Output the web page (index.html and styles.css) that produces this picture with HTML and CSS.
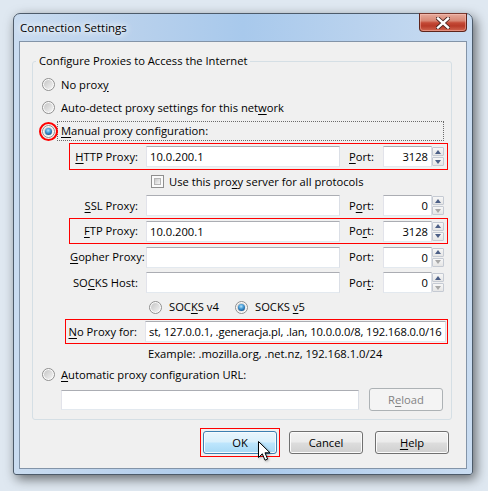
FILE: index.html
```html
<!DOCTYPE html>
<html>
<head>
<meta charset="utf-8">
<title>Connection Settings</title>
<link rel="stylesheet" href="styles.css">
</head>
<body>
<div class="window">
  <div class="titlebar">
    <span class="title">Connection Settings</span>
    <div class="close">
      <svg width="14" height="12" viewBox="0 0 14 12">
        <path d="M2 1.5 L12 10.5 M12 1.5 L2 10.5" stroke="#4a2520" stroke-width="4.2" stroke-linecap="square"/>
        <path d="M2 1.5 L12 10.5 M12 1.5 L2 10.5" stroke="#ffffff" stroke-width="2.4" stroke-linecap="square"/>
      </svg>
    </div>
  </div>
  <div class="client">
    <fieldset class="group">
      <legend>Configure Proxies to Access the Internet</legend>
      <div class="row radio-row"><span class="radio"></span><span>No prox<u>y</u></span></div>
      <div class="row radio-row"><span class="radio"></span><span>Auto-detect proxy settings for this net<u>w</u>ork</span></div>
      <div class="row manual-row">
        <span class="radio checked"><span class="ring"></span></span>
        <span class="focus"><u>M</u>anual proxy configuration:</span>
      </div>
      <div class="row proxy-row hl h27">
        <span class="plabel"><u>H</u>TTP Proxy:</span>
        <input class="text host" value="10.0.200.1">
        <span class="portlabel"><u>P</u>ort:</span>
        <input class="text port" value="3128">
        <span class="spin"><span class="sb"><i class="up"></i></span><span class="sb"><i class="down"></i></span></span>
      </div>
      <div class="row check-row"><span class="check"></span><span>Use this pro<u>x</u>y server for all protocols</span></div>
      <div class="row proxy-row h25">
        <span class="plabel"><u>S</u>SL Proxy:</span>
        <input class="text host" value="">
        <span class="portlabel">P<u>o</u>rt:</span>
        <input class="text port" value="0">
        <span class="spin"><span class="sb"><i class="up"></i></span><span class="sb"><i class="down off"></i></span></span>
      </div>
      <div class="row proxy-row hl h26">
        <span class="plabel"><u>F</u>TP Proxy:</span>
        <input class="text host" value="10.0.200.1">
        <span class="portlabel">Po<u>r</u>t:</span>
        <input class="text port" value="3128">
        <span class="spin"><span class="sb"><i class="up"></i></span><span class="sb"><i class="down"></i></span></span>
      </div>
      <div class="row proxy-row h26">
        <span class="plabel"><u>G</u>opher Proxy:</span>
        <input class="text host" value="">
        <span class="portlabel">Port:</span>
        <input class="text port" value="0">
        <span class="spin"><span class="sb"><i class="up"></i></span><span class="sb"><i class="down off"></i></span></span>
      </div>
      <div class="row proxy-row h25">
        <span class="plabel">SO<u>C</u>KS Host:</span>
        <input class="text host" value="">
        <span class="portlabel">Por<u>t</u>:</span>
        <input class="text port" value="0">
        <span class="spin"><span class="sb"><i class="up"></i></span><span class="sb"><i class="down off"></i></span></span>
      </div>
      <div class="row socks-row">
        <span class="socks-opt first"><span class="radio"></span><span>SOC<u>K</u>S v4</span></span>
        <span class="socks-opt"><span class="radio checked"></span><span>SOCKS <u>v</u>5</span></span>
      </div>
      <div class="row noproxy-row hl">
        <span class="nlabel"><u>N</u>o Proxy for:</span>
        <input class="text noproxy" value="st, 127.0.0.1, .generacja.pl, .lan, 10.0.0.0/8, 192.168.0.0/16">
      </div>
      <div class="row example-row">Example: .mozilla.org, .net.nz, 192.168.1.0/24</div>
      <div class="row radio-row"><span class="radio"></span><span><u>A</u>utomatic proxy configuration URL:</span></div>
      <div class="row url-row">
        <input class="text url" value="">
        <span class="btn disabled reload">R<u>e</u>load</span>
      </div>
    </fieldset>
    <div class="buttons">
      <span class="hl-btn"><span class="btn hot">OK</span></span>
      <span class="btn">Cancel</span>
      <span class="btn"><u>H</u>elp</span>
    </div>
  </div>
</div>
<svg class="cursor" width="14" height="21" viewBox="0 0 14 21">
  <path d="M0.5 0.5 L0.5 16.5 L4.3 12.8 L7 19.2 L9.6 18.1 L7 11.8 L12 11.8 Z" fill="#ffffff" stroke="#000000" stroke-width="1" stroke-linejoin="miter"/>
</svg>
</body>
</html>
```
FILE: styles.css
```css
* { box-sizing: border-box; }
html, body { margin: 0; }
body {
  width: 488px;
  height: 491px;
  overflow: hidden;
  position: relative;
  padding: 13px 0 0 13px;
  background: #dfe8f1;
  font-family: "Segoe UI", "Open Sans", "Noto Sans", sans-serif;
  font-size: 11.2px;
  line-height: 16px;
  color: #000;
}
u { text-decoration: underline; text-underline-offset: 2px; }

.window {
  width: 460px;
  height: 462px;
  border: 1px solid #4d5b6a;
  border-radius: 7px 7px 3px 3px;
  background: linear-gradient(90deg, #cadcf0 0%, #b7d0ec 28%, #a8c9ec 50%, #b9d2ee 75%, #c9dcf1 100%);
  box-shadow: 3px 4px 12px rgba(0, 0, 0, 0.55);
  padding: 0 5px 5px;
  display: flex;
  flex-direction: column;
}
.titlebar {
  height: 27px;
  display: flex;
  align-items: center;
  justify-content: space-between;
}
.title {
  padding-left: 1px;
  font-size: 11.5px;
  text-shadow: 0 0 5px #ffffff, 0 0 9px #ffffff, 0 0 12px rgba(255,255,255,0.8);
}
.close {
  align-self: flex-start;
  margin-top: -1px;
  width: 48px;
  height: 19px;
  border: 1px solid #5e241b;
  border-top-color: #7a3a30;
  border-radius: 0 0 4px 4px;
  background: linear-gradient(#e6aa9b 0%, #d88673 40%, #c44a36 52%, #b83a28 70%, #d06650 100%);
  box-shadow: inset 0 0 0 1px rgba(255, 200, 190, 0.45);
  display: flex;
  align-items: center;
  justify-content: center;
}

.client {
  flex: 1;
  border: 1px solid #8394a8;
  background: #f0f0f0;
  padding: 11px 14px 0 12px;
  display: flex;
  flex-direction: column;
}
.group {
  margin: 0;
  padding: 4px 0 6px;
  border: 1px solid #d5dfe5;
  border-radius: 3px;
  min-width: 0;
}
.group legend {
  padding: 0 3px;
  margin-left: 3px;
  line-height: 16px;
}

.row { display: flex; align-items: center; }
.radio-row { height: 23px; padding-left: 9px; gap: 6px; }
.manual-row { height: 24px; padding-left: 9px; gap: 2px; position: relative; }
.focus {
  width: 387px;
  height: 20px;
  border: 1px dotted #6a6a6a;
  padding: 0 3px;
  display: flex;
  align-items: center;
}

.radio {
  position: relative;
  flex: none;
  width: 13px;
  height: 13px;
  border-radius: 50%;
  border: 1px solid #8f8f8f;
  background: #fbfbfb;
}
.radio::before {
  content: "";
  position: absolute;
  left: 1px; top: 1px; right: 1px; bottom: 1px;
  border-radius: 50%;
  background: linear-gradient(135deg, #c6c6c6 0%, #dcdcdc 50%, #f4f4f4 100%);
}
.radio.checked::after {
  content: "";
  position: absolute;
  left: 2px; top: 2px;
  width: 7px; height: 7px;
  border-radius: 50%;
  background: radial-gradient(circle at 45% 35%, #b9e3fb 0%, #4ea3dc 35%, #185a96 75%, #12406e 100%);
}
.radio .ring {
  position: absolute;
  left: -4px; top: -4px;
  width: 19px; height: 19px;
  border: 2px solid #ff0000;
  border-radius: 50%;
}

.check {
  position: relative;
  flex: none;
  width: 13px;
  height: 13px;
  border: 1px solid #8f8f8f;
  background: #fbfbfb;
}
.check::before {
  content: "";
  position: absolute;
  left: 2px; top: 2px; right: 2px; bottom: 2px;
  background: linear-gradient(135deg, #c9c9c9 0%, #e2e2e2 55%, #f6f6f6 100%);
  border: 1px solid #b5b5b5;
}
.check-row { height: 23px; padding-left: 118px; gap: 5px; }

.proxy-row {
  margin-left: 36px;
  width: 379px;
  padding: 0 1px;
}
.hl { box-shadow: inset 0 0 0 1px #ff0000; }
.h27 { height: 27px; }
.h26 { height: 26px; }
.h25 { height: 25px; }
.plabel { width: 68px; text-align: right; margin-right: 8px; white-space: nowrap; }
.portlabel { width: 34px; margin-left: 9px; }

input.text {
  font: inherit;
  color: #000;
  height: 21px;
  margin: 0;
  padding: 0 3px;
  border: 1px solid;
  border-color: #abadb3 #dbdfe6 #e3e9ef #e2e3ea;
  background: #ffffff;
  outline: none;
}
.host { width: 194px; }
.port { width: 49px; text-align: right; padding-right: 2px; }
.spin {
  width: 12px;
  height: 19px;
  display: flex;
  flex-direction: column;
  gap: 1px;
}
.sb {
  flex: 1;
  border: 1px solid #c5cad3;
  border-radius: 1px;
  background: linear-gradient(#f7f7f7, #e6e6e6);
  display: flex;
  align-items: center;
  justify-content: center;
}
.sb i { width: 0; height: 0; border-left: 3.5px solid transparent; border-right: 3.5px solid transparent; }
.sb .up { border-bottom: 4px solid #4c5f86; }
.sb .down { border-top: 4px solid #4c5f86; }
.sb .down.off { border-top-color: #a8a8a8; }

.socks-row { height: 24px; padding-left: 116px; }
.socks-opt { display: flex; align-items: center; gap: 7px; }
.socks-opt.first { width: 86px; }

.noproxy-row {
  height: 25px;
  margin-left: 32px;
  width: 383px;
  padding: 0 1px;
}
.nlabel { width: 71px; text-align: right; margin-right: 8px; white-space: nowrap; }
.noproxy { width: 301px; letter-spacing: -0.1px; }

.example-row { height: 19px; padding-left: 115px; }
.url-row { height: 27px; padding-left: 28px; gap: 10px; }
.url { width: 298px; height: 20px !important; }

.btn {
  display: flex;
  align-items: center;
  justify-content: center;
  width: 74px;
  height: 23px;
  border: 1px solid #707070;
  border-radius: 3px;
  background: linear-gradient(#f2f2f2 0%, #ebebeb 48%, #dddddd 52%, #cfcfcf 100%);
  box-shadow: inset 0 0 0 1px #fbfbfb;
}
.btn.hot {
  border-color: #3c7fb1;
  background: linear-gradient(#eaf6fd 0%, #d9f0fc 48%, #bee6fd 52%, #a7d9f5 100%);
  box-shadow: inset 0 0 0 1px #f6fbfe;
}
.btn.disabled {
  color: #838383;
  border-color: #adb2b5;
  background: #f4f4f4;
  box-shadow: none;
}
.reload { height: 23px; }

.buttons {
  display: flex;
  justify-content: flex-end;
  gap: 12px;
  margin-top: 11px;
  padding-right: 3px;
}
.hl-btn {
  display: block;
  border: 1px solid #ff0000;
  padding: 2px;
  margin: -3px;
}

.cursor {
  position: absolute;
  left: 258px;
  top: 441px;
  filter: drop-shadow(1px 1px 1px rgba(0, 0, 0, 0.3));
}
```
